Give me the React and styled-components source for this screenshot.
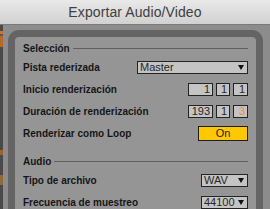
import styled, { createGlobalStyle } from "styled-components";

const GlobalStyle = createGlobalStyle`
  html, body {
    margin: 0;
    padding: 0;
    background: #8c8c8c;
  }
  * {
    box-sizing: border-box;
  }
`;

const Window = styled.div`
  width: 270px;
  height: 209px;
  overflow: hidden;
  display: flex;
  flex-direction: column;
  background: #8c8c8c;
  font-family: "Liberation Sans", Arial, sans-serif;
`;

const TitleBar = styled.div`
  height: 25px;
  flex: 0 0 25px;
  display: flex;
  align-items: center;
  justify-content: center;
  background: linear-gradient(#e9e9e9, #d1d1d1);
  border-bottom: 1px solid #7a7a7a;
  color: #404040;
  font-size: 14px;
  letter-spacing: 0.1px;
`;

const Body = styled.div`
  flex: 1;
  display: flex;
  min-height: 0;
`;

const BackStrip = styled.div`
  width: 3px;
  flex: 0 0 3px;
  background: linear-gradient(
    #4a4a4a 0px,
    #4a4a4a 6px,
    #c9772a 6px,
    #c9772a 9px,
    #5a5a5a 9px,
    #5a5a5a 11px,
    #b46a28 11px,
    #b46a28 22px,
    #4a4a4a 22px,
    #4a4a4a 125px,
    #a0642a 125px,
    #a0642a 130px,
    #4a4a4a 130px,
    #4a4a4a 150px,
    #8f6a3a 150px,
    #8f6a3a 160px,
    #4a4a4a 160px
  );
`;

const Content = styled.div`
  flex: 1;
  padding: 5px 7px 0 5px;
  display: flex;
  min-width: 0;
`;

const Panel = styled.div`
  flex: 1;
  border: 7px solid #646464;
  border-bottom: none;
  border-radius: 11px 11px 0 0;
  background: #959595;
  padding: 3px 8px 0 8px;
  display: flex;
  flex-direction: column;
`;

const SectionHead = styled.div`
  height: 16px;
  flex: 0 0 16px;
  display: flex;
  align-items: center;
  gap: 3px;
  margin-top: ${({ $spaced }) => ($spaced ? "9px" : "0")};
  font-size: 10px;
  font-weight: bold;
  color: #151515;

  &::after {
    content: "";
    flex: 1;
    height: 1px;
    background: #5f5f5f;
  }
`;

const Row = styled.div`
  height: 22px;
  flex: 0 0 22px;
  display: flex;
  align-items: center;
  justify-content: space-between;
`;

const Label = styled.span`
  font-size: 10px;
  font-weight: bold;
  color: #151515;
  white-space: nowrap;
`;

const Select = styled.div`
  width: ${({ $w }) => $w}px;
  height: ${({ $h }) => $h || 13}px;
  display: flex;
  align-items: center;
  justify-content: space-between;
  padding: 0 3px 0 2px;
  background: #c4c4c4;
  border: 1px solid #232323;
  color: #262626;
  font-size: 11px;
  line-height: 1;
`;

const Arrow = styled.span`
  width: 0;
  height: 0;
  border-left: 3.5px solid transparent;
  border-right: 3.5px solid transparent;
  border-top: 5px solid #111;
`;

const Fields = styled.div`
  display: flex;
  gap: 3px;
`;

const Field = styled.div`
  width: ${({ $w }) => $w}px;
  height: 13px;
  display: flex;
  align-items: center;
  justify-content: flex-end;
  padding-right: 2px;
  background: #c4c4c4;
  border: 1px solid #232323;
  color: ${({ $accent }) => ($accent ? "#ee8a3c" : "#262626")};
  font-size: 11px;
  line-height: 1;
`;

const Toggle = styled.div`
  width: 50px;
  height: 15px;
  display: flex;
  align-items: center;
  justify-content: center;
  background: #ffc800;
  border: 1.5px solid #1d1d1d;
  color: #222;
  font-size: 11px;
`;

export default function App() {
  return (
    <>
      <GlobalStyle />
      <Window>
        <TitleBar>Exportar Audio/Video</TitleBar>
        <Body>
          <BackStrip />
          <Content>
            <Panel>
              <SectionHead>Selección</SectionHead>
              <Row>
                <Label>Pista rederizada</Label>
                <Select $w={111}>
                  Master
                  <Arrow />
                </Select>
              </Row>
              <Row>
                <Label>Inicio renderización</Label>
                <Fields>
                  <Field $w={25}>1</Field>
                  <Field $w={14}>1</Field>
                  <Field $w={15}>1</Field>
                </Fields>
              </Row>
              <Row>
                <Label>Duración de renderización</Label>
                <Fields>
                  <Field $w={25}>193</Field>
                  <Field $w={14}>1</Field>
                  <Field $w={15} $accent>
                    3
                  </Field>
                </Fields>
              </Row>
              <Row>
                <Label>Renderizar como Loop</Label>
                <Toggle>On</Toggle>
              </Row>
              <SectionHead $spaced>Audio</SectionHead>
              <Row>
                <Label>Tipo de archivo</Label>
                <Select $w={47}>
                  WAV
                  <Arrow />
                </Select>
              </Row>
              <Row>
                <Label>Frecuencia de muestreo</Label>
                <Select $w={47}>
                  44100
                  <Arrow />
                </Select>
              </Row>
            </Panel>
          </Content>
        </Body>
      </Window>
    </>
  );
}
